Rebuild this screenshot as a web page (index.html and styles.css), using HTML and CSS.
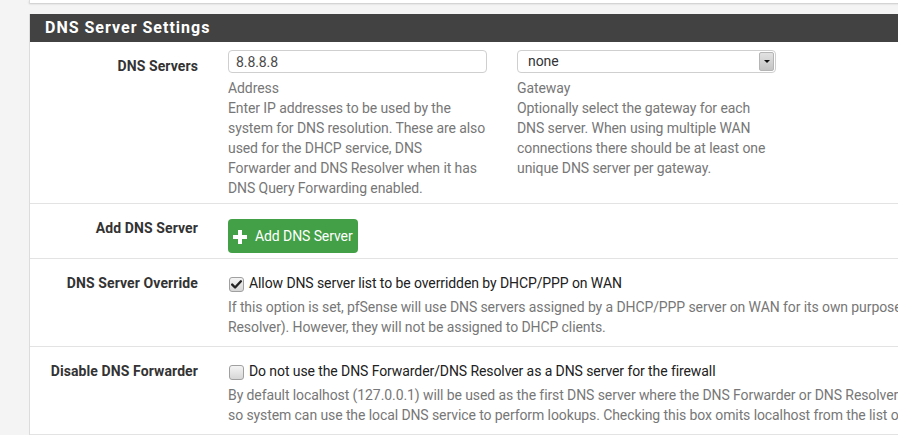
FILE: index.html
```html
<!DOCTYPE html>
<html>
<head>
<meta charset="utf-8">
<link rel="stylesheet" href="styles.css">
</head>
<body>
<div class="page">
  <div class="prev-panel"></div>
  <div class="panel">
    <div class="panel-heading"><h2 class="panel-title">DNS Server Settings</h2></div>
    <div class="panel-body">
      <div class="form-row row-servers">
        <div class="lbl">DNS Servers</div>
        <div class="ctl">
          <div class="cols">
            <div class="col">
              <input class="text-input" type="text" value="8.8.8.8">
              <div class="help">Address<br>Enter IP addresses to be used by the<br>system for DNS resolution. These are also<br>used for the DHCP service, DNS<br>Forwarder and DNS Resolver when it has<br>DNS Query Forwarding enabled.</div>
            </div>
            <div class="col">
              <div class="select"><span class="select-value">none</span><span class="select-btn"><span class="select-arrow"></span></span></div>
              <div class="help">Gateway<br>Optionally select the gateway for each<br>DNS server. When using multiple WAN<br>connections there should be at least one<br>unique DNS server per gateway.</div>
            </div>
          </div>
        </div>
      </div>
      <div class="form-row row-add">
        <div class="lbl">Add DNS Server</div>
        <div class="ctl">
          <span class="btn-success"><svg class="plus" viewBox="0 0 14 14" width="14" height="14"><path d="M5 0h4v5h5v4H9v5H5V9H0V5h5z" fill="#fff"/></svg><span>Add DNS Server</span></span>
        </div>
      </div>
      <div class="form-row row-check">
        <div class="lbl">DNS Server Override</div>
        <div class="ctl">
          <div class="check-line"><span class="cb"><svg viewBox="0 0 15 15" width="15" height="15"><path d="M3.2 7.6l2.9 2.9 5.8-6.2" fill="none" stroke="#222" stroke-width="2.4" stroke-linecap="round" stroke-linejoin="round"/></svg></span><span class="check-text">Allow DNS server list to be overridden by DHCP/PPP on WAN</span></div>
          <div class="help help-check">If this option is set, pfSense will use DNS servers assigned by a DHCP/PPP server on WAN for its own purposes (including the DNS Forwarder/DNS<br>Resolver). However, they will not be assigned to DHCP clients.</div>
        </div>
      </div>
      <div class="form-row row-check">
        <div class="lbl">Disable DNS Forwarder</div>
        <div class="ctl">
          <div class="check-line"><span class="cb"></span><span class="check-text">Do not use the DNS Forwarder/DNS Resolver as a DNS server for the firewall</span></div>
          <div class="help help-check">By default localhost (127.0.0.1) will be used as the first DNS server where the DNS Forwarder or DNS Resolver is enabled and set to listen on localhost,<br>so system can use the local DNS service to perform lookups. Checking this box omits localhost from the list of DNS servers in resolv.conf.</div>
        </div>
      </div>
    </div>
  </div>
</div>
</body>
</html>
```
FILE: styles.css
```css
html, body {
  margin: 0;
  padding: 0;
}
body {
  width: 898px;
  height: 435px;
  overflow: hidden;
  background: #f4f4f4;
  font-family: Roboto, "Liberation Sans", Arial, sans-serif;
  font-size: 14px;
  line-height: 20px;
  color: #212121;
  letter-spacing: -0.09px;
}
.page {
  padding-left: 29px;
}
.prev-panel {
  width: 1200px;
  height: 3px;
  background: #fff;
  border-left: 1px solid #dcdcdc;
  box-shadow: 0 1px 2px rgba(0, 0, 0, 0.18);
}
.panel {
  margin-top: 11px;
  width: 1200px;
  background: #fff;
  border-left: 1px solid #dcdcdc;
}
.panel-heading {
  background: #424242;
  height: 28px;
  padding-left: 15px;
}
.panel-title {
  margin: 0;
  font-size: 16px;
  line-height: 28px;
  font-weight: bold;
  letter-spacing: 1px;
  color: #fff;
}
.form-row {
  display: flex;
  border-bottom: 1px solid #e3e3e3;
}
.lbl {
  flex: none;
  width: 168px;
  padding-right: 15px;
  padding-top: 14px;
  text-align: right;
  font-weight: bold;
  color: #333;
  letter-spacing: 0.1px;
}
.ctl {
  padding-left: 15px;
  white-space: nowrap;
}
.row-servers .ctl {
  padding-top: 8px;
  padding-bottom: 5px;
}
.row-add .ctl {
  padding-top: 15px;
  padding-bottom: 5px;
}
.row-check .ctl {
  padding-top: 14px;
  padding-bottom: 9px;
}
.cols {
  display: flex;
  gap: 30px;
}
.col {
  width: 259px;
}
.text-input {
  display: block;
  box-sizing: border-box;
  width: 259px;
  height: 23px;
  margin: 0;
  padding: 0 7px;
  border: 1px solid #cfcfcf;
  border-radius: 4px;
  font-family: inherit;
  font-size: 14px;
  letter-spacing: -0.09px;
  color: #4a4a4a;
  background: #fff;
  outline: none;
}
.select {
  display: flex;
  box-sizing: border-box;
  width: 259px;
  height: 23px;
  border: 1px solid #cfcfcf;
  border-radius: 4px;
  background: #fff;
  padding: 1px;
}
.select-value {
  flex: 1;
  padding-left: 9px;
  line-height: 19px;
  color: #333;
}
.select-btn {
  display: flex;
  align-items: center;
  justify-content: center;
  width: 13px;
  background: linear-gradient(#e2e2e2, #c4c4c4);
  border: 1px solid #b5b5b5;
  border-radius: 2px;
}
.select-arrow {
  width: 0;
  height: 0;
  border-left: 3px solid transparent;
  border-right: 3px solid transparent;
  border-top: 3px solid #111;
}
.help {
  margin-top: 5px;
  color: #777;
}
.help-check {
  margin-top: 4px;
}
.btn-success {
  display: inline-flex;
  align-items: center;
  height: 34px;
  box-sizing: border-box;
  padding: 0 5px;
  background: #43a047;
  border-radius: 4px;
  color: #fff;
}
.plus {
  margin-right: 8px;
  margin-top: 1px;
}
.check-line {
  display: flex;
  align-items: flex-start;
}
.cb {
  flex: none;
  box-sizing: border-box;
  width: 15px;
  height: 15px;
  margin-top: 4px;
  margin-left: 1px;
  border: 1px solid #a0a0a0;
  border-radius: 3px;
  background: linear-gradient(#f4f4f4, #d6d6d6);
  display: flex;
  align-items: center;
  justify-content: center;
}
.cb svg {
  display: block;
  margin: -1px;
}
.check-text {
  margin-left: 5px;
  color: #212121;
}
```
